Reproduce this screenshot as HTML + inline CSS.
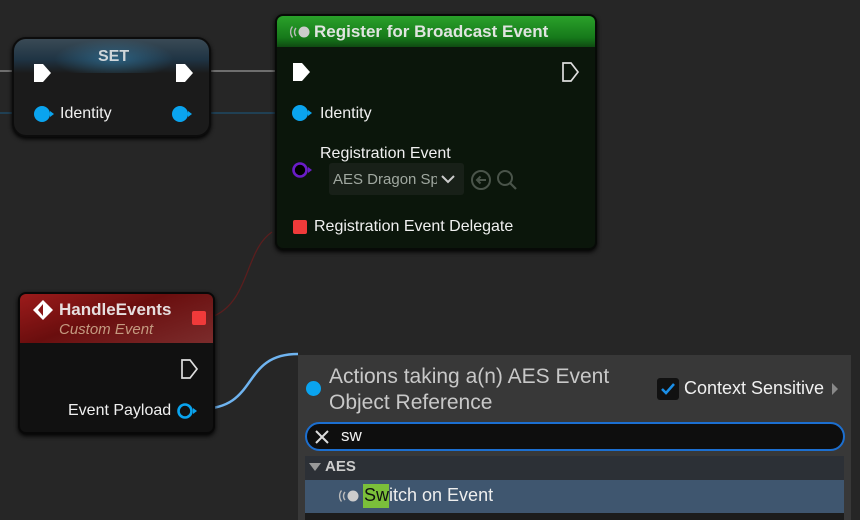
<!DOCTYPE html>
<html><head><meta charset="utf-8"><style>
*{margin:0;padding:0;box-sizing:border-box}
html,body{width:860px;height:520px}
body{background:#262626;position:relative;overflow:hidden;font-family:"Liberation Sans",sans-serif;color:#e8e8e8}
.a{position:absolute}
.t{font-size:16px;color:#f0f0f0;white-space:nowrap}
</style></head><body>
<svg class="a" style="left:0;top:0" width="860" height="520">
<line x1="0" y1="71" x2="30" y2="71" stroke="#9a9a9a" stroke-width="1.3"/>
<line x1="195" y1="71" x2="290" y2="71" stroke="#9a9a9a" stroke-width="1.3"/>
<line x1="0" y1="113" x2="30" y2="113" stroke="#1e4f70" stroke-width="1.3"/>
<line x1="195" y1="113" x2="290" y2="113" stroke="#1e4f70" stroke-width="1.3"/>
<path d="M214 316 C250 300 245 250 272 232" stroke="#5a1e1e" stroke-width="1.3" fill="none"/>
<path d="M200 409 C260 409 240 354 298 354" stroke="#6fb4f0" stroke-width="2.5" fill="none"/>
</svg>

<div class="a" style="left:12px;top:37px;width:199px;height:100px;border-radius:14px;background:#1b1b1b;border:2px solid #0c0c0c;box-shadow:0 2px 4px #000;overflow:hidden">
<div class="a" style="left:0;top:0;width:100%;height:34px;background:linear-gradient(180deg,#3a4a55,#1f3444 60%,#1b1b1b);"></div>
<div class="a" style="left:40px;top:0;width:120px;height:34px;background:radial-gradient(ellipse at 50% 60%,rgba(60,150,200,.45),transparent 70%)"></div>
<div class="a t" style="left:84px;top:9px;font-weight:bold;color:#cfd6da">SET</div>
<svg class="a" style="left:18px;top:23px" width="20" height="22"><path d="M2 2h9l8 9-8 9H2z" fill="#fff"/></svg>
<svg class="a" style="left:160px;top:23px" width="20" height="22"><path d="M2 2h9l8 9-8 9H2z" fill="#fff"/></svg>
<svg class="a" style="left:18px;top:66px" width="24" height="18"><circle cx="10" cy="9" r="8" fill="#0aa4ef"/><path d="M18 6l4 3-4 3z" fill="#0aa4ef"/></svg>
<svg class="a" style="left:156px;top:66px" width="24" height="18"><circle cx="10" cy="9" r="8" fill="#0aa4ef"/><path d="M18 6l4 3-4 3z" fill="#0aa4ef"/></svg>
<div class="a t" style="left:46px;top:66px">Identity</div>
</div>

<div class="a" style="left:275px;top:14px;width:322px;height:236px;border-radius:8px;background:#0b160b;border:2px solid #070a07;box-shadow:0 2px 5px #000;overflow:hidden">
<div class="a" style="left:0;top:0;width:100%;height:31px;background:linear-gradient(180deg,#2aa12a,#16791a 70%,#0f4a12)"></div>
<svg class="a" style="left:10px;top:8px" width="26" height="16"><circle cx="17" cy="8" r="5.5" fill="#ccc"/><path d="M9 4a6 6 0 0 0 0 8M5.5 2.5a9 9 0 0 0 0 11" stroke="#bbb" fill="none" stroke-width="1.4"/></svg>
<div class="a t" style="left:37px;top:6px;font-weight:bold;font-size:17px;color:#e0e4e0">Register for Broadcast Event</div>
<svg class="a" style="left:14px;top:45px" width="20" height="22"><path d="M2 2h9l8 9-8 9H2z" fill="#fff"/></svg>
<svg class="a" style="left:284px;top:45px" width="20" height="22"><path d="M2 2h8l7 9-7 9H2z" fill="none" stroke="#ddd" stroke-width="1.7"/></svg>
<svg class="a" style="left:13px;top:88px" width="24" height="18"><circle cx="10" cy="9" r="8" fill="#0aa4ef"/><path d="M18 6l4 3-4 3z" fill="#0aa4ef"/></svg>
<div class="a t" style="left:43px;top:89px">Identity</div>
<div class="a t" style="left:43px;top:129px">Registration Event</div>
<svg class="a" style="left:13px;top:145px" width="24" height="18"><circle cx="10" cy="9" r="6.5" fill="#000" stroke="#6a1cc8" stroke-width="2.6"/><path d="M18 6l4 3-4 3z" fill="#6a1cc8"/></svg>
<div class="a" style="left:52px;top:147px;width:135px;height:32px;background:#182018;border-radius:3px"></div>
<div class="a t" style="left:56px;top:155px;font-size:15px;color:#a0a8a0;width:104px;overflow:hidden">AES Dragon Spawn</div>
<svg class="a" style="left:163px;top:157px" width="16" height="12"><path d="M2 3l6 6 6-6" stroke="#ccc" stroke-width="2" fill="none"/></svg>
<svg class="a" style="left:192px;top:151px" width="50" height="26"><circle cx="12" cy="13" r="9" stroke="#4a544a" stroke-width="2" fill="none"/><path d="M17 13H8m3.5-3.5L8 13l3.5 3.5" stroke="#4a544a" stroke-width="2" fill="none"/><circle cx="36" cy="11" r="7" stroke="#4a544a" stroke-width="2" fill="none"/><path d="M41 16l6 6" stroke="#4a544a" stroke-width="2.2"/></svg>
<div class="a" style="left:16px;top:204px;width:14px;height:14px;background:#f03a3a;border-radius:2px"></div>
<div class="a t" style="left:37px;top:202px">Registration Event Delegate</div>
</div>

<div class="a" style="left:18px;top:292px;width:197px;height:142px;border-radius:8px;background:#111;border:2px solid #080808;box-shadow:0 2px 5px #000;overflow:hidden">
<div class="a" style="left:0;top:0;width:100%;height:49px;background:linear-gradient(160deg,#9c1b1b,#6a0e0e 45%,#7b2c2c)"></div>
<svg class="a" style="left:12px;top:5px" width="22" height="22"><path d="M11 1l10 10-10 10L1 11z" fill="#fff"/><path d="M11 5l-5 6 5 6z" fill="#8a1515"/></svg>
<div class="a t" style="left:39px;top:6px;font-weight:bold;font-size:17px;color:#e6dede">HandleEvents</div>
<div class="a t" style="left:39px;top:27px;font-style:italic;font-size:15px;color:#c49a80">Custom Event</div>
<div class="a" style="left:172px;top:17px;width:14px;height:14px;background:#f03a3a;border-radius:2px"></div>
<svg class="a" style="left:160px;top:64px" width="20" height="22"><path d="M2 2h8l7 9-7 9H2z" fill="none" stroke="#ddd" stroke-width="1.7"/></svg>
<div class="a t" style="left:48px;top:108px">Event Payload</div>
<svg class="a" style="left:155px;top:107px" width="26" height="20"><circle cx="10" cy="10" r="6.5" fill="none" stroke="#0aa4ef" stroke-width="2.6"/><path d="M18 7l4 3-4 3z" fill="#0aa4ef"/></svg>
</div>

<div class="a" style="left:298px;top:355px;width:553px;height:165px;background:#383838"></div>
<div class="a" style="left:306px;top:381px;width:15px;height:15px;border-radius:50%;background:#0aa4ef"></div>
<div class="a t" style="left:329px;top:364px;font-size:21px;color:#c8c8c8;line-height:26px;white-space:normal;width:320px">Actions taking a(n) AES Event<br>Object Reference</div>
<div class="a" style="left:657px;top:378px;width:22px;height:22px;background:#111;border-radius:3px"></div>
<svg class="a" style="left:659px;top:381px" width="18" height="16"><path d="M3 8l4 4 8-9" stroke="#1a8fe8" stroke-width="2.5" fill="none"/></svg>
<div class="a t" style="left:684px;top:378px;font-size:18px">Context Sensitive</div>
<svg class="a" style="left:831px;top:383px" width="8" height="12"><path d="M1 0l6 6-6 6z" fill="#888"/></svg>
<div class="a" style="left:305px;top:422px;width:540px;height:29px;background:#0e0e0e;border:2px solid #1c6fd0;border-radius:15px"></div>
<svg class="a" style="left:314px;top:429px" width="16" height="16"><path d="M2 2l12 12M14 2L2 14" stroke="#ddd" stroke-width="2"/></svg>
<div class="a t" style="left:341px;top:426px;font-size:17px">sw</div>
<div class="a" style="left:305px;top:456px;width:539px;height:24px;background:#2c3036"></div>
<svg class="a" style="left:309px;top:463px" width="12" height="10"><path d="M0 0h12L6 8z" fill="#999"/></svg>
<div class="a t" style="left:325px;top:458px;font-weight:bold;font-size:15px;color:#ccc">AES</div>
<div class="a" style="left:305px;top:480px;width:539px;height:33px;background:#3f566f"></div>
<svg class="a" style="left:336px;top:488px" width="26" height="16"><circle cx="17" cy="8" r="5.5" fill="#ccc"/><path d="M9 4a6 6 0 0 0 0 8M5.5 2.5a9 9 0 0 0 0 11" stroke="#bbb" fill="none" stroke-width="1.4"/></svg>
<div class="a" style="left:363px;top:484px;width:26px;height:24px;background:#7bbf3a"></div>
<div class="a t" style="left:364px;top:485px;font-size:18px;color:#eee"><span style="color:#111">Sw</span>itch on Event</div>
<div class="a" style="left:305px;top:513px;width:539px;height:7px;background:#1c1c1c"></div>
</body></html>
